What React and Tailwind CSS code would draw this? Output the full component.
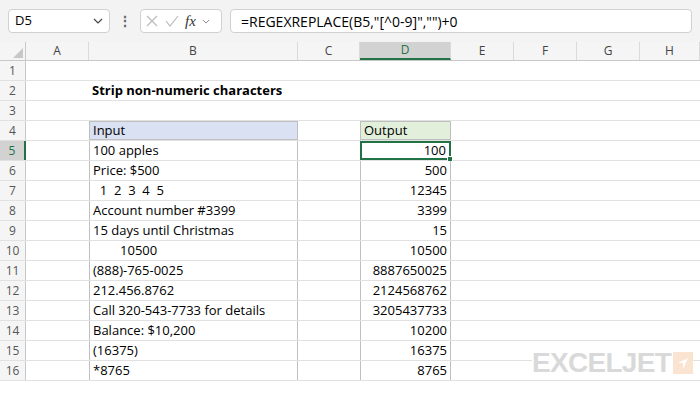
import React from "react";

const cols = [
  { k: "A", w: 63 },
  { k: "B", w: 209 },
  { k: "C", w: 62 },
  { k: "D", w: 91 },
  { k: "E", w: 63 },
  { k: "F", w: 63 },
  { k: "G", w: 63 },
  { k: "H", w: 60 },
];

const data = [
  ["100 apples", "100"],
  ["Price: $500", "500"],
  ["  1  2  3  4  5", "12345"],
  ["Account number #3399", "3399"],
  ["15 days until Christmas", "15"],
  ["        10500", "10500"],
  ["(888)-765-0025", "8887650025"],
  ["212.456.8762", "2124568762"],
  ["Call 320-543-7733 for details", "3205437733"],
  ["Balance: $10,200", "10200"],
  ["(16375)", "16375"],
  ["*8765", "8765"],
];

function Cell({ w, children, className = "" }) {
  return (
    <div style={{ width: w }} className={`h-full shrink-0 flex items-center ${className}`}>
      {children}
    </div>
  );
}

export default function App() {
  const rows = [];
  for (let r = 1; r <= 16; r++) {
    const sel = r === 5;
    const i = r - 5;
    let b = null, d = null;
    if (r === 2) b = <Cell w={209} className="px-[3px] font-bold"><span className="whitespace-nowrap">Strip non-numeric characters</span></Cell>;
    if (r === 4) {
      b = <Cell w={209} className="px-[3px] bg-[#d9e1f2] border border-[#bfbfbf]">Input</Cell>;
      d = <Cell w={91} className="px-[3px] bg-[#e2efda] border border-[#bfbfbf]">Output</Cell>;
    }
    if (r >= 5) {
      b = <Cell w={209} className="px-[3px] border-x border-[#bfbfbf] whitespace-pre">{data[i][0]}</Cell>;
      d = (
        <Cell w={91} className={`px-[3px] justify-end relative ${sel ? "border-2 border-[#217346]" : "border-x border-[#bfbfbf]"}`}>
          {data[i][1]}
          {sel && <div className="absolute right-[-4px] bottom-[-4px] w-[6px] h-[6px] bg-[#217346] border border-white" />}
        </Cell>
      );
    }
    const line = r >= 4 ? "border-[#bfbfbf]" : "border-[#e1e1e1]";
    rows.push(
      <div key={r} className={`flex border-b h-[20px] box-border ${r >= 4 ? "border-[#e1e1e1]" : "border-[#e1e1e1]"}`}>
        <div className={`w-[26px] shrink-0 flex items-center justify-center text-[12px] ${sel ? "bg-[#d2d2d2] text-[#217346] border-r-2 border-[#217346]" : "bg-[#f5f5f5] text-[#555] border-r border-[#c8c8c8]"}`}>{r}</div>
        <div className="w-[63px] shrink-0" />
        {b || <Cell w={209} />}
        <div className="w-[62px] shrink-0" />
        {d || <Cell w={91} />}
      </div>
    );
  }
  return (
    <div className="relative w-[700px] h-[400px] overflow-hidden bg-white text-[13px] text-black" style={{ fontFamily: '"Open Sans", "Liberation Sans", sans-serif' }}>
      <div className="h-[42px] bg-[#f3f3f3] flex items-center px-2 gap-2">
        <div className="w-[102px] h-[24px] bg-white border border-[#d0d0d0] rounded-[4px] flex items-center justify-between px-[6px]">
          <span className="text-[13px]">D5</span>
          <svg width="10" height="6" viewBox="0 0 10 6"><path d="M1 1l4 4 4-4" stroke="#444" fill="none" strokeWidth="1.2" /></svg>
        </div>
        <div className="text-[#666] text-[14px] leading-none font-bold">⋮</div>
        <div className="w-[82px] h-[24px] bg-white border border-[#d0d0d0] rounded-[4px] flex items-center gap-[6px] px-[4px]">
          <svg width="14" height="14" viewBox="0 0 14 14"><path d="M2 2l10 10M12 2L2 12" stroke="#bbb" strokeWidth="1.2" /></svg>
          <svg width="14" height="14" viewBox="0 0 14 14"><path d="M1 7l4 5 8-10" stroke="#bbb" fill="none" strokeWidth="1.2" /></svg>
          <span className="italic text-[15px] text-[#333]" style={{ fontFamily: '"Liberation Serif", serif' }}>fx</span>
          <svg width="8" height="5" viewBox="0 0 10 6"><path d="M1 1l4 4 4-4" stroke="#888" fill="none" strokeWidth="1.2" /></svg>
        </div>
        <div className="flex-1 h-[24px] bg-white border border-[#d0d0d0] rounded-[4px] flex items-center px-[10px] text-[14px]">
          =REGEXREPLACE(B5,"[^0-9]","")+0
        </div>
      </div>
      <div className="flex h-[19px] bg-[#f5f5f5] border-b border-[#c8c8c8] text-[12px] text-[#444]">
        <div className="w-[26px] shrink-0 border-r border-[#c8c8c8] relative">
          <svg className="absolute right-[2px] bottom-[2px]" width="10" height="10"><path d="M10 0L10 10L0 10Z" fill="#c8c8c8" /></svg>
        </div>
        {cols.map((c) => (
          <div key={c.k} style={{ width: c.w }} className={`shrink-0 flex items-center justify-center border-r border-[#dadada] ${c.k === "D" ? "bg-[#d2d2d2] text-[#217346] border-b-2 border-b-[#217346]" : ""}`}>{c.k}</div>
        ))}
      </div>
      {rows}
      <div className="absolute left-[532px] top-[349px] flex items-center gap-[2px] bg-white">
        <span className="text-[28px] font-bold text-[#d9d9d9] tracking-tight leading-none" style={{ fontFamily: '"Liberation Sans", sans-serif' }}>EXCELJET</span>
        <div className="w-[20px] h-[22px] bg-[#fbe3d1] flex items-center justify-center">
          <svg width="12" height="14" viewBox="0 0 12 14"><path d="M11 2L1 7h5l0 6z" fill="#fff" /></svg>
        </div>
      </div>
    </div>
  );
}
